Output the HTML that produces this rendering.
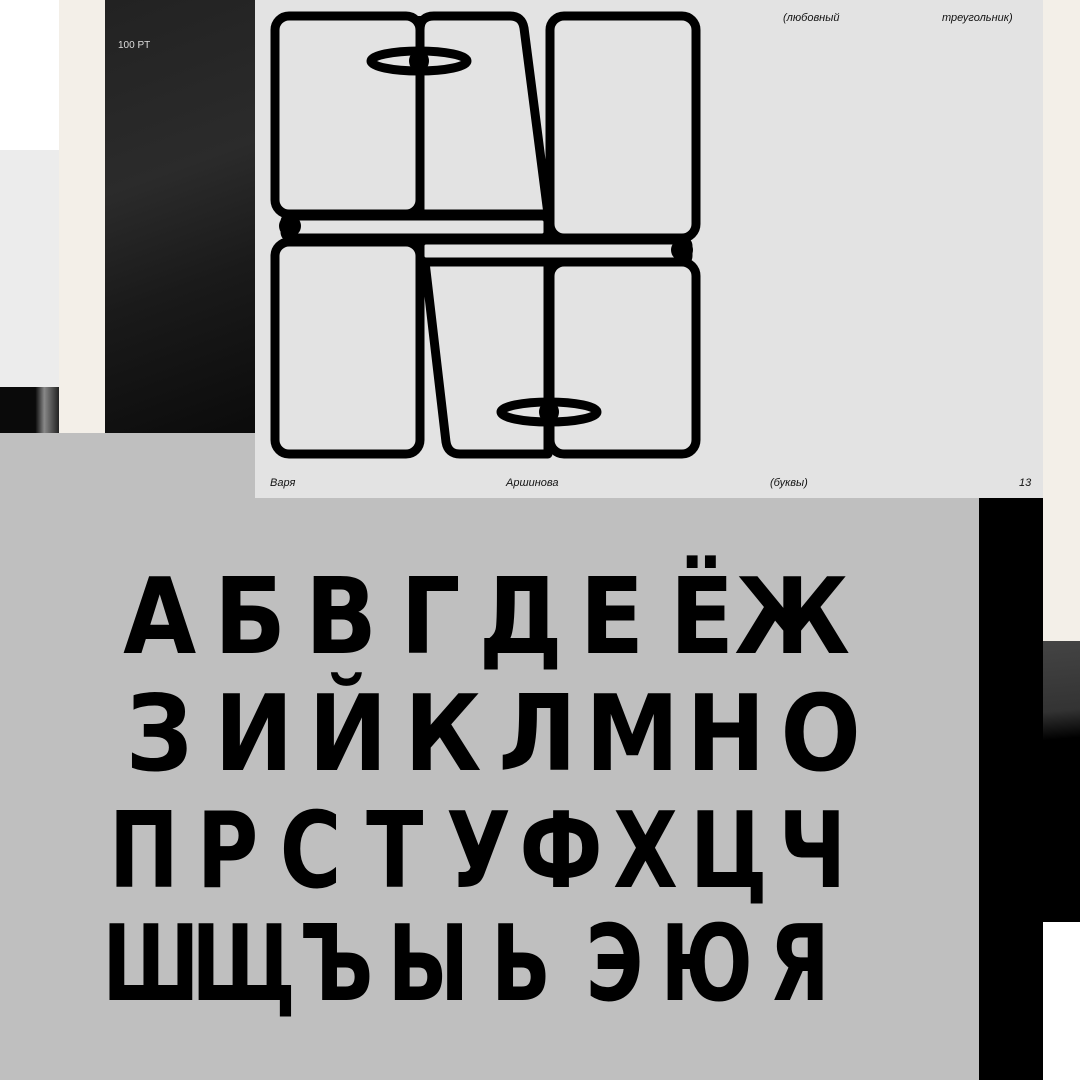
<!DOCTYPE html>
<html><head><meta charset="utf-8"><style>
*{margin:0;padding:0;box-sizing:border-box}
body{width:1080px;height:1080px;position:relative;overflow:hidden;background:#fff;font-family:"Liberation Sans",sans-serif}
.a{position:absolute}
.row{position:absolute;display:grid;font-family:"DejaVu Sans",sans-serif;font-weight:bold;font-size:105px;line-height:1;color:#000}
.row span{display:flex;justify-content:center;min-width:0;white-space:nowrap}
.row span i{font-style:normal;display:inline-block;transform:scaleX(0.9)}
.t{position:absolute;font-style:italic;font-size:11px;color:#111}
</style></head><body>
<div class="a" style="left:0;top:150px;width:59px;height:237px;background:#ececec"></div>
<div class="a" style="left:0;top:387px;width:59px;height:46px;background:linear-gradient(90deg,#0a0a0a 60%,#888 75%,#222)"></div>
<div class="a" style="left:59px;top:0;width:46px;height:433px;background:#f3efe8"></div>
<div class="a" style="left:105px;top:0;width:150px;height:433px;background:linear-gradient(160deg,#222 0%,#2b2b2b 40%,#1a1a1a 65%,#0b0b0b 100%)"></div>
<div class="a" style="left:118px;top:40px;color:#ddd;font-size:10px">100 PT</div>
<div class="a" style="left:1043px;top:0;width:37px;height:641px;background:#f3efe8"></div>
<div class="a" style="left:1043px;top:641px;width:37px;height:281px;background:linear-gradient(175deg,#444 0%,#333 25%,#000 35%,#000 100%)"></div>
<div class="a" style="left:0;top:433px;width:979px;height:647px;background:#bfbfbf"></div>
<div class="a" style="left:979px;top:498px;width:64px;height:582px;background:#000"></div>
<div class="a" style="left:255px;top:0;width:788px;height:498px;background:#e3e3e3"></div>
<svg class="a" style="left:255px;top:0" width="788" height="498" viewBox="255 0 788 498">
<g fill="none" stroke="#000" stroke-width="9" stroke-linejoin="round">
<rect x="275" y="16" width="145" height="198" rx="14"/>
<rect x="275" y="242" width="145" height="212" rx="14"/>
<rect x="550" y="16" width="146" height="222" rx="14"/>
<rect x="550" y="262" width="146" height="192" rx="14"/>
<path d="M420 30 Q420 16 434 16 L510 16 Q522 16 524 28 L548 214 L420 214 Z"/>
<path d="M425 262 L548 262 L548 454 L460 454 Q448 454 446 442 Z"/>
<path d="M420 16 L420 214"/>
<rect x="285" y="216" width="263" height="22" rx="6"/>
<rect x="420" y="240" width="268" height="22" rx="6"/>
<ellipse cx="419" cy="61" rx="48" ry="10"/>
<ellipse cx="549" cy="412" rx="48" ry="10"/>
</g>
<g fill="#000"><ellipse cx="419" cy="61" rx="10" ry="11"/><ellipse cx="549" cy="412" rx="10" ry="11"/>
<circle cx="290" cy="226" r="11"/><circle cx="682" cy="250" r="11"/></g>
</svg>
<div class="t" style="left:783px;top:12px">(любовный</div>
<div class="t" style="left:942px;top:12px">треугольник)</div>
<div class="t" style="left:270px;top:477px">Варя</div>
<div class="t" style="left:506px;top:477px">Аршинова</div>
<div class="t" style="left:770px;top:477px">(буквы)</div>
<div class="t" style="left:1019px;top:477px">13</div>
<div class="row" style="left:115px;top:565px;width:722px;grid-template-columns:repeat(8,minmax(0,1fr))"><span><i>А</i></span><span><i>Б</i></span><span><i>В</i></span><span><i>Г</i></span><span><i>Д</i></span><span><i>Е</i></span><span><i>Ё</i></span><span><i>Ж</i></span></div>
<div class="row" style="left:112px;top:682px;width:756px;grid-template-columns:repeat(8,minmax(0,1fr))"><span><i>З</i></span><span><i>И</i></span><span><i>Й</i></span><span><i>К</i></span><span><i>Л</i></span><span><i>М</i></span><span><i>Н</i></span><span><i>О</i></span></div>
<div class="row" style="left:102px;top:799px;width:752px;grid-template-columns:repeat(9,minmax(0,1fr))"><span><i style="transform:scaleX(.8)">П</i></span><span><i style="transform:scaleX(.8)">Р</i></span><span><i style="transform:scaleX(.8)">С</i></span><span><i style="transform:scaleX(.8)">Т</i></span><span><i style="transform:scaleX(.8)">У</i></span><span><i style="transform:scaleX(.8)">Ф</i></span><span><i style="transform:scaleX(.8)">Х</i></span><span><i style="transform:scaleX(.8)">Ц</i></span><span><i style="transform:scaleX(.8)">Ч</i></span></div>
<div class="row" style="left:104px;top:912px;width:742px;grid-template-columns:repeat(8,minmax(0,1fr))"><span><i style="transform:scaleX(.75)">Ш</i></span><span><i style="transform:scaleX(.75)">Щ</i></span><span><i style="transform:scaleX(.75)">Ъ</i></span><span><i style="transform:scaleX(.75)">Ы</i></span><span><i style="transform:scaleX(.75)">Ь</i></span><span><i style="transform:scaleX(.75)">Э</i></span><span><i style="transform:scaleX(.75)">Ю</i></span><span><i style="transform:scaleX(.75)">Я</i></span></div>
</body></html>
